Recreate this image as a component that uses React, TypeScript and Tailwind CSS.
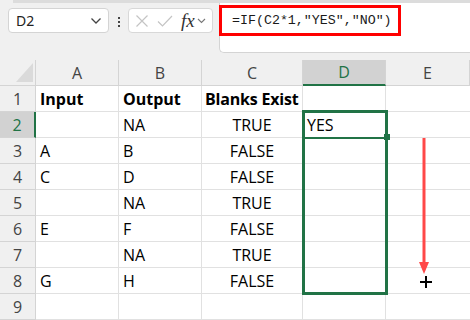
import React from "react";

type Row = { n: number; a: string; b: string; c: string; d: string; bold?: boolean };
const rows: Row[] = [
  { n: 1, a: "Input", b: "Output", c: "Blanks Exist", d: "", bold: true },
  { n: 2, a: "", b: "NA", c: "TRUE", d: "YES" },
  { n: 3, a: "A", b: "B", c: "FALSE", d: "" },
  { n: 4, a: "C", b: "D", c: "FALSE", d: "" },
  { n: 5, a: "", b: "NA", c: "TRUE", d: "" },
  { n: 6, a: "E", b: "F", c: "FALSE", d: "" },
  { n: 7, a: "", b: "NA", c: "TRUE", d: "" },
  { n: 8, a: "G", b: "H", c: "FALSE", d: "" },
  { n: 9, a: "", b: "", c: "", d: "" },
];

const cellFont = { fontFamily: '"Open Sans", "Liberation Sans", sans-serif' };

export default function App() {
  return (
    <div className="w-[470px] h-[320px] overflow-hidden bg-[#f0f0f0] relative" style={cellFont}>
      {/* top edge */}
      <div className="ml-[13px] h-[3px] bg-[#dcdcdc]" />
      {/* toolbar */}
      <div className="flex items-start h-[57px]">
        <div className="mt-[5px] ml-[8px] w-[101px] h-[25px] bg-white border border-[#d4d4d4] rounded-[4px] flex items-center justify-between pl-[7px] pr-[6px]">
          <span className="text-[14px] text-[#222]" style={{ fontFamily: '"Noto Sans", sans-serif' }}>D2</span>
          <svg width="12" height="8" viewBox="0 0 12 8">
            <path d="M1.5 1.5 L6 6 L10.5 1.5" fill="none" stroke="#444" strokeWidth="1.3" />
          </svg>
        </div>
        <div className="mt-[14px] ml-[9px] flex flex-col gap-[2px]">
          <div className="w-[2px] h-[2px] bg-[#444]" />
          <div className="w-[2px] h-[2px] bg-[#444]" />
          <div className="w-[2px] h-[2px] bg-[#444]" />
        </div>
        <div className="mt-[5px] ml-[8px] w-[85px] h-[25px] bg-white border border-[#d8d8d8] rounded-[4px] flex items-center pl-[5px]">
          <svg width="14" height="14" viewBox="0 0 14 14" className="ml-[1px]">
            <path d="M1.5 1.5 L12.5 12.5 M12.5 1.5 L1.5 12.5" stroke="#c4c4c4" strokeWidth="1.2" />
          </svg>
          <svg width="16" height="14" viewBox="0 0 16 14" className="ml-[8px]">
            <path d="M1 7.5 L5.5 12 L15 2" fill="none" stroke="#c4c4c4" strokeWidth="1.2" />
          </svg>
          <span
            className="ml-[8px] text-[19px] italic text-[#333] leading-none"
            style={{ fontFamily: '"Liberation Serif", serif' }}
          >
            fx
          </span>
          <svg width="9" height="6" viewBox="0 0 9 6" className="ml-[2px]">
            <path d="M1 1 L4.5 4.5 L8 1" fill="none" stroke="#777" strokeWidth="1.1" />
          </svg>
        </div>
        <div className="ml-[6px] flex-1 h-[50px] bg-white border-l border-b border-[#d4d4d4] rounded-bl-[5px]" />
      </div>

      {/* red annotation box */}
      <div className="absolute left-[219px] top-[5px] w-[182px] h-[31px] border-[3px] border-[#ff0000] flex items-center pl-[10px]">
        <span className="text-[13.3px] text-[#1a1a1a]" style={{ fontFamily: '"Liberation Mono", monospace' }}>
          =IF(C2*1,"YES","NO")
        </span>
      </div>

      {/* grid */}
      <div className="relative">
        <div className="grid grid-cols-[36px_83px_83px_101px_83px_84px]">
          {/* header row */}
          <div className="h-[26px] border-r border-b border-[#d4d4d4] relative">
            <svg width="18" height="19" viewBox="0 0 18 19" className="absolute left-[16px] top-[3px]">
              <path d="M17 0 L17 19 L0 19 Z" fill="#dadada" />
            </svg>
          </div>
          {["A", "B", "C", "D", "E"].map((l) => (
            <div
              key={l}
              className={
                l === "D"
                  ? "h-[26px] bg-[#d2d2d2] border-r border-[#d4d4d4] border-b-2 border-b-[#217346] flex items-center justify-center text-[16px] text-[#217346]"
                  : "h-[26px] border-r border-b border-[#d4d4d4] flex items-center justify-center text-[16px] text-[#444]"
              }
            >
              {l}
            </div>
          ))}
          {rows.map((r) => (
            <React.Fragment key={r.n}>
              <div
                className={
                  r.n === 2
                    ? "h-[26px] bg-[#d2d2d2] border-r-2 border-r-[#217346] border-b border-b-[#d4d4d4] flex items-center justify-center text-[16px] text-[#217346]"
                    : "h-[26px] border-r border-b border-[#d4d4d4] flex items-center justify-center text-[16px] text-[#444]"
                }
              >
                {r.n}
              </div>
              <div className={`h-[26px] bg-white border-r border-b border-[#e1e1e1] flex items-center pl-[4px] text-[16px] text-black ${r.bold ? "font-bold" : ""}`}>
                {r.a}
              </div>
              <div className={`h-[26px] bg-white border-r border-b border-[#e1e1e1] flex items-center pl-[4px] text-[16px] text-black ${r.bold ? "font-bold" : ""}`}>
                {r.b}
              </div>
              <div
                className={`h-[26px] bg-white border-r border-b border-[#e1e1e1] flex items-center text-[16px] text-black ${
                  r.bold ? "font-bold pl-[3px] whitespace-nowrap tracking-[-0.2px]" : "justify-center"
                }`}
              >
                {r.c}
              </div>
              <div className="h-[26px] bg-white border-r border-b border-[#e1e1e1] flex items-center pl-[4px] text-[16px] text-black">
                {r.d}
              </div>
              <div className="h-[26px] bg-white border-b border-[#e1e1e1]" />
            </React.Fragment>
          ))}
        </div>

        {/* selection overlay */}
        <div className="absolute left-[302px] top-[50px] w-[86px] h-[185px] border-[3px] border-[#217346]" />
        <div className="absolute left-[302px] top-[77px] w-[86px] h-[2px] bg-[#217346]" />
        <div className="absolute left-[384px] top-[74px] w-[6px] h-[6px] bg-[#217346]" />

        {/* red arrow */}
        <svg className="absolute left-[417px] top-[78px]" width="14" height="137" viewBox="0 0 14 137">
          <path d="M7 0 L7 126" stroke="#ff4848" strokeWidth="3" />
          <path d="M2 124 L12 124 L7 136 Z" fill="#ff4848" />
        </svg>
        {/* plus cursor */}
        <svg className="absolute left-[420px] top-[216px]" width="12" height="12" viewBox="0 0 12 12">
          <path d="M6 0 L6 12 M0 6 L12 6" stroke="#000" strokeWidth="2" />
        </svg>
      </div>
    </div>
  );
}
